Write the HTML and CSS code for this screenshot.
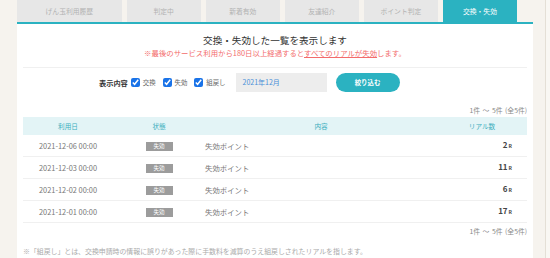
FILE: index.html
```html
<!DOCTYPE html>
<html>
<head>
  <title>交換・失効</title>
  <link rel="stylesheet" href="styles.css">
</head>
<body>
  <div class="page">
    <div class="main">
      <ul class="tabs">
        <li class="tab tab-wide">げん玉利用履歴</li>
        <li class="tab">判定中</li>
        <li class="tab">新着有効</li>
        <li class="tab">友達紹介</li>
        <li class="tab">ポイント判定</li>
        <li class="tab active">交換・失効</li>
      </ul>

      <div class="panel">
        <div class="intro">
          <h1>交換・失効した一覧を表示します</h1>
          <p class="notice">※最後のサービス利用から180日以上経過すると<u>すべてのリアルが失効</u>します。</p>
        </div>

        <div class="filter">
          <span class="filter-label">表示内容</span>
          <label class="check"><input type="checkbox" checked>交換</label>
          <label class="check"><input type="checkbox" checked>失効</label>
          <label class="check"><input type="checkbox" checked>組戻し</label>
          <div class="month">2021年12月</div>
          <button class="submit">絞り込む</button>
        </div>

        <p class="count">1件 〜 5件 (全5件)</p>

        <table class="history">
          <thead>
            <tr>
              <th class="col-date">利用日</th>
              <th class="col-state">状態</th>
              <th class="col-content">内容</th>
              <th class="col-num">リアル数</th>
            </tr>
          </thead>
          <tbody>
            <tr>
              <td class="col-date">2021-12-06 00:00</td>
              <td class="col-state"><span class="badge">失効</span></td>
              <td class="col-content left">失効ポイント</td>
              <td class="col-num right">2<small>R</small></td>
            </tr>
            <tr>
              <td class="col-date">2021-12-03 00:00</td>
              <td class="col-state"><span class="badge">失効</span></td>
              <td class="col-content left">失効ポイント</td>
              <td class="col-num right">11<small>R</small></td>
            </tr>
            <tr>
              <td class="col-date">2021-12-02 00:00</td>
              <td class="col-state"><span class="badge">失効</span></td>
              <td class="col-content left">失効ポイント</td>
              <td class="col-num right">6<small>R</small></td>
            </tr>
            <tr>
              <td class="col-date">2021-12-01 00:00</td>
              <td class="col-state"><span class="badge">失効</span></td>
              <td class="col-content left">失効ポイント</td>
              <td class="col-num right">17<small>R</small></td>
            </tr>
          </tbody>
        </table>

        <p class="count count-bottom">1件 〜 5件 (全5件)</p>

        <p class="footnote">※「組戻し」とは、交換申請時の情報に誤りがあった際に手数料を減算のうえ組戻しされたリアルを指します。</p>
      </div>
    </div>
    <div class="side"></div>
  </div>
</body>
</html>
```

FILE: styles.css
```css
body {
  margin: 0;
  background-color: #f6f3ee;
  font-family: "Noto Sans CJK JP", "Noto Sans", sans-serif;
  color: #333;
}

.page {
  display: flex;
  height: 258px;
  overflow: hidden;
}

.main {
  width: 516px;
  margin-left: 17px;
}

.side {
  margin-left: 12px;
  width: 5px;
  border-left: 1px solid #e4dfd6;
  background-color: #f9f7f3;
}

.tabs {
  display: flex;
  gap: 5px;
  list-style: none;
  margin: 0;
  padding: 0;
  width: 500px;
}

.tab {
  width: 75px;
  height: 22px;
  line-height: 22px;
  text-align: center;
  background-color: #e7e7e7;
  color: #b2b2b2;
  font-size: 6.8px;
}

.tab-wide {
  width: 106px;
}

.tab.active {
  background-color: #2bb2c1;
  color: #fff;
}

.panel {
  background-color: #fff;
  border-top: 2px solid #2bb2c1;
  padding: 0 6px 20px;
}

.intro {
  text-align: center;
  padding-top: 9px;
  height: 34px;
  border-bottom: 1px solid #f0f0f0;
}

h1 {
  margin: 0;
  font-size: 9.6px;
  font-weight: normal;
  line-height: 14px;
  color: #333;
}

.notice {
  margin: 0;
  font-size: 7.4px;
  line-height: 11px;
  color: #f36b6b;
}

.notice u {
  text-decoration-color: #f36b6b;
}

.filter {
  display: flex;
  align-items: center;
  height: 25px;
  padding-left: 76px;
  margin-top: 2px;
}

.filter-label {
  font-size: 7.2px;
  font-weight: bold;
  color: #333;
  margin-right: 3px;
}

.check {
  display: flex;
  align-items: center;
  font-size: 6.4px;
  line-height: 10px;
  color: #666;
  margin-right: 7px;
}

.check input {
  width: 9px;
  height: 9px;
  margin: 0 3px 0 0;
  accent-color: #1a73e8;
}

.month {
  width: 84px;
  height: 19px;
  line-height: 19px;
  padding-left: 7px;
  margin-left: 3px;
  background-color: #ededed;
  color: #4b8fd8;
  font-size: 7px;
}

.submit {
  width: 64px;
  height: 19px;
  margin-left: 9px;
  border: none;
  border-radius: 10px;
  background-color: #2bb2c1;
  color: #fff;
  font-family: inherit;
  font-size: 6.4px;
  font-weight: bold;
  padding: 0;
}

.count {
  margin: 0;
  text-align: right;
  font-size: 6.8px;
  line-height: 10px;
  color: #888;
  padding-top: 10px;
  padding-bottom: 2px;
  word-spacing: 1px;
}

.count-bottom {
  padding-top: 3px;
}

.history {
  width: 504px;
  border-collapse: collapse;
  table-layout: fixed;
}

.history th {
  height: 18px;
  padding: 0;
  line-height: 10px;
  background-color: #e3f4f6;
  color: #3aaebd;
  font-size: 6.6px;
  font-weight: normal;
  text-align: center;
}

.history td {
  height: 21px;
  padding: 0;
  line-height: 10px;
  border-bottom: 1px solid #f0f0f0;
  font-size: 7.4px;
  color: #777;
  text-align: center;
}

.col-date { width: 90px; }
.col-state { width: 92px; }
.col-content { width: 232px; }
.col-num { width: 90px; }

.history td.left {
  text-align: left;
}

.history td.right {
  text-align: right;
  padding-right: 15px;
  font-size: 8px;
  font-weight: bold;
  color: #444;
}

.right small {
  font-size: 5px;
  margin-left: 1px;
}

.badge {
  display: inline-block;
  width: 27px;
  height: 9px;
  line-height: 9px;
  background-color: #9c9c9c;
  color: #fff;
  font-size: 5.6px;
  vertical-align: middle;
}

.footnote {
  margin: 8px 0 0;
  font-size: 6.9px;
  line-height: 10px;
  color: #aaa;
}
```
